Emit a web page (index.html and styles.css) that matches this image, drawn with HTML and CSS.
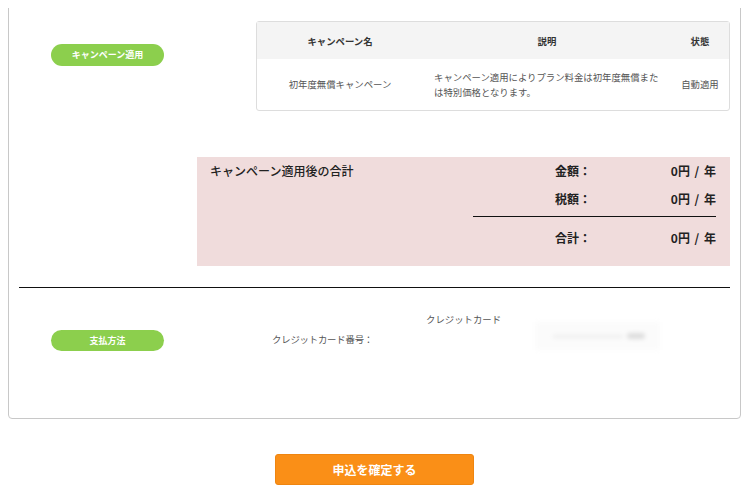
FILE: index.html
```html
<!DOCTYPE html>
<html lang="ja">
<head>
<meta charset="utf-8">
<title>お申込み内容の確認</title>
<link rel="stylesheet" href="styles.css">
</head>
<body>

<div class="confirm-box">
  <div class="campaign-row">
    <div class="badge campaign-badge">キャンペーン適用</div>
    <table cellspacing="0" class="campaign-table">
      <thead>
        <tr>
          <th class="name">キャンペーン名</th>
          <th class="desc">説明</th>
          <th class="status">状態</th>
        </tr>
      </thead>
      <tbody>
        <tr>
          <td class="name">初年度無償キャンペーン</td>
          <td class="desc">キャンペーン適用によりプラン料金は初年度無償または特別価格となります。</td>
          <td class="status">自動適用</td>
        </tr>
      </tbody>
    </table>
  </div>

  <div class="total-box">
    <div class="total-title">キャンペーン適用後の合計</div>
    <div class="total-list">
      <div class="total-line"><span class="label">金額：</span><span class="value">0円 / 年</span></div>
      <div class="total-line tax"><span class="label">税額：</span><span class="value">0円 / 年</span></div>
      <div class="total-line sum"><span class="label">合計：</span><span class="value">0円 / 年</span></div>
    </div>
  </div>

  <hr class="divider">

  <div class="pay-row">
    <div class="badge pay-badge">支払方法</div>
    <div class="pay-label">クレジットカード番号：</div>
    <div class="pay-type">クレジットカード</div>
    <div class="card-mask"><span class="mask-line"></span><span class="mask-dot"></span></div>
  </div>
</div>

<div class="submit-area">
  <button type="button" class="submit-button">申込を確定する</button>
</div>

</body>
</html>
```

FILE: styles.css
```css
body {margin: 8px; font-family: "Noto Sans CJK JP", "Noto Sans", sans-serif; color: #333; background: #fff;}

.confirm-box {margin: -40px 4px 0 0; padding: 52px 10px 0 10px; border: 1px solid #c8c8c8; border-radius: 4px;}

.badge {width: 113px; height: 22px; line-height: 22px; border-radius: 11px; background: #8ccf4d; color: #fff; font-size: 9px; font-weight: bold; text-align: center;}

.campaign-row {display: flex; align-items: flex-start;}
.campaign-badge {margin: 23px 0 0 32px;}

.campaign-table {margin-left: 92px; width: 474px; border: 1px solid #ddd; border-radius: 3px; border-collapse: separate; font-size: 9.4px; color: #555; table-layout: fixed;}
.campaign-table th {background: #f4f4f4; height: 37px; padding: 0; font-weight: bold; color: #333;}
.campaign-table td {height: 51px; padding: 0; text-align: center; line-height: 15px;}
.campaign-table .name {width: 166px;}
.campaign-table .desc {width: 248px;}
.campaign-table td.desc {text-align: left; padding: 0 11px;}
.campaign-table .status {width: 58px;}

.total-box {display: flex; justify-content: space-between; margin: 46px 0 0 178px; padding: 0 14px 14px 13px; background: #f0dcdc; font-size: 12px;}
.total-title {line-height: 28px; font-weight: 500; color: #222;}
.total-list {width: 243px;}
.total-line {display: flex; line-height: 28px; font-weight: bold; color: #222;}
.total-line .label {margin-left: 82px;}
.total-line .value {margin-left: auto; word-spacing: 2px;}
.total-line.tax {border-bottom: 1px solid #111; padding-bottom: 3px;}
.total-line.sum {margin-top: 7px;}

.divider {margin: 21px 0 0 0; border: 0; border-top: 1px solid #111; height: 0;}

.pay-row {display: flex; align-items: flex-start; padding: 24px 0 67px 0; font-size: 9.4px; color: #555;}
.pay-badge {margin: 18px 0 0 32px; height: 21px; line-height: 21px;}
.pay-label {width: 209px; margin-top: 20px; line-height: 14px; text-align: right; letter-spacing: -0.2px;}
.pay-type {width: 162px; padding-left: 53px; box-sizing: border-box; line-height: 14px;}
.card-mask {display: flex; align-items: center; width: 125px; height: 28px; margin-top: 10px; background: #fbfbfb; filter: blur(2px);}
.mask-line {display: block; margin-left: 18px; width: 70px; height: 3px; background: #eee;}
.mask-dot {display: block; margin-left: 4px; width: 18px; height: 6px; border-radius: 3px; background: #ddd;}

.submit-area {margin-top: 35px; text-align: center;}
.submit-button {width: 199px; height: 31px; margin-left: -4px; border: 1px solid #ef8510; border-radius: 3px; background: #fa8f17; color: #fff; font-family: "Noto Sans CJK JP", sans-serif; font-size: 12px; font-weight: bold; cursor: pointer;}
```
